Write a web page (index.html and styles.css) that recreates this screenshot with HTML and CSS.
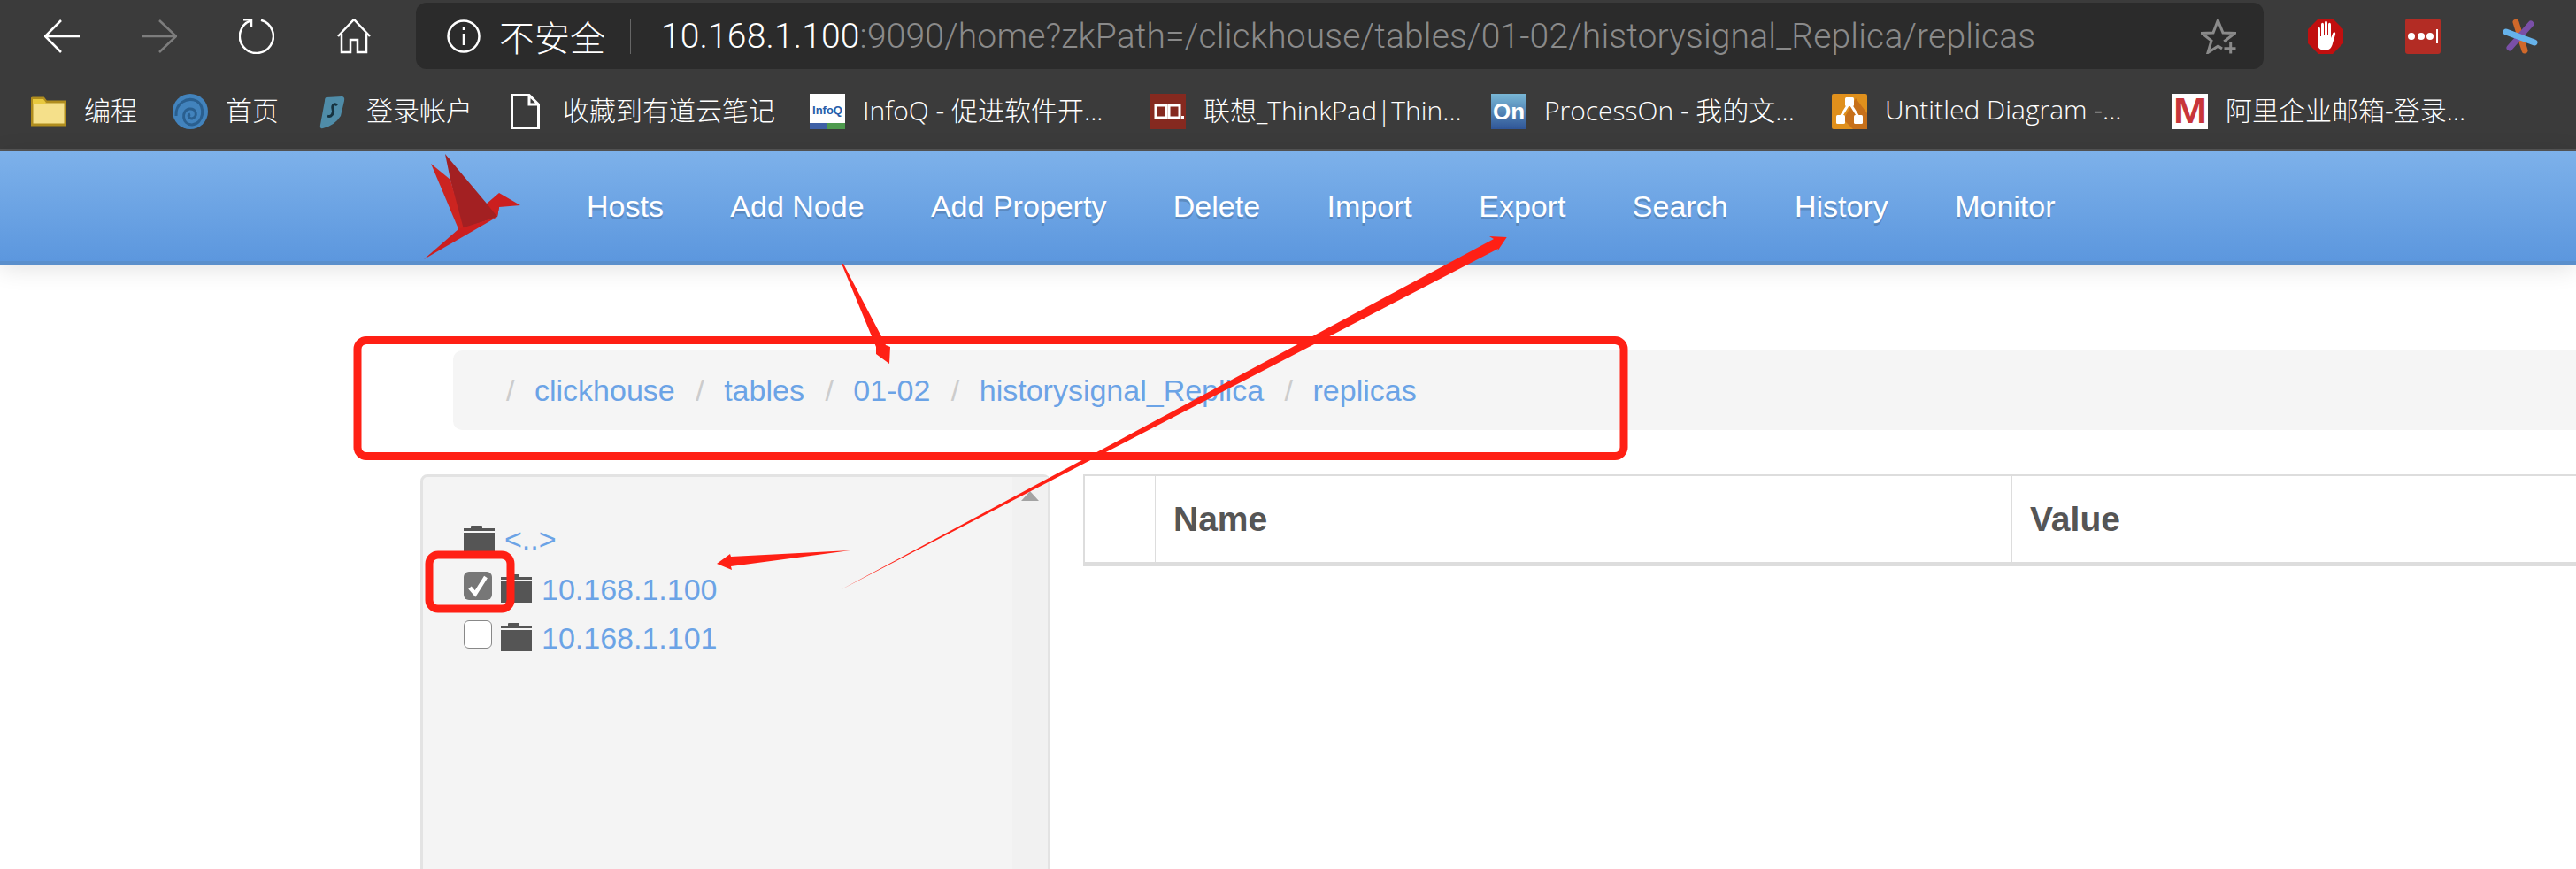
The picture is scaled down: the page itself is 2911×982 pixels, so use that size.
FILE: index.html
```html
<!DOCTYPE html>
<html lang="zh-CN">
<head>
<meta charset="utf-8">
<title>ZooKeeper Browser</title>
<link rel="stylesheet" href="styles.css">
</head>
<body>
<div class="browser">
  <div class="toolbar">
    <div class="tool-group">
      <svg class="ico" viewBox="0 0 40 40"><path d="M19 2 1 20 19 38M1 20H40" class="ln"/></svg>
      <svg class="ico" viewBox="0 0 40 40"><path d="M20 2 39 20 20 38M39 20H0" class="ln dim"/></svg>
      <svg class="ico" viewBox="0 0 40 40"><path d="M25 1.700A19 19 0 1 1 13 2.300" class="ln"/><path d="M5 1.200H14V10" class="ln"/></svg>
      <svg class="ico" viewBox="0 0 40 40"><path d="M2 20 20 1 38 20M6 17V38H16V24H24V38H34V17" class="ln"/></svg>
    </div>
    <div class="address">
      <svg class="info" viewBox="0 0 38 38"><circle cx="19" cy="19" r="17.500" class="ln"/><path d="M19 16V29M19 9V12" class="ln"/></svg>
      <span class="insecure">不安全</span>
      <span class="divider"></span>
      <span class="url"><span class="host">10.168.1.100</span>:9090/home?zkPath=/clickhouse/tables/01-02/historysignal_Replica/replicas</span>
      <svg class="star" viewBox="0 0 40 40"><path d="M29 26.500 27.500 25 38.500 16.500 25 16 19.300 2 14 16 1 16.500 12 25 8 38.500 19.500 31 24 34" class="ln grey thick"/><path d="M33.700 26V39.500M26.500 33.700H39.500" class="ln grey thick"/></svg>
    </div>
    <div class="tool-group">
      <svg class="ico" viewBox="0 0 40 40"><path d="M12 0H28L40 12V28L28 40H12L0 28V12Z" fill="#c10f0f"/><path d="M11 12c0-3 3-3 3 0v8l1 0V7c0-3 3-3 3 0v12h1V5c0-3 3-3 3 0v14h1V7c0-3 3-3 3 0v15l2-5c1-3 4-2 3 1l-3 10c-1 5-4 8-9 8-5 0-8-3-8-8Z" fill="#fff"/></svg>
      <svg class="ico" viewBox="0 0 40 40"><rect width="40" height="40" rx="3" fill="#b32c24"/><circle cx="7" cy="20" r="4" fill="#fff"/><circle cx="18" cy="20" r="4" fill="#fff"/><circle cx="28" cy="20" r="4" fill="#fff"/><rect x="35" y="12" width="2" height="16" fill="#fff"/></svg>
      <svg class="ico" viewBox="0 0 40 40"><path d="M15 4 25 36" class="band orange"/><path d="M32 6 8 33" class="band purple"/><path d="M4 15 36 27" class="band blue"/></svg>
    </div>
  </div>
  <div class="bookmarks">
    <div class="bm"><svg class="fav" viewBox="0 0 40 40"><path d="M1 6Q1 5 2 5H14L17 9H39V35H1Z" fill="#f5e08a" stroke="#b08d1e" stroke-width="3"/><path d="M2 6H14L17 10 14 12H2Z" fill="#e8c93f"/></svg><span>编程</span></div>
    <div class="bm"><svg class="fav" viewBox="0 0 40 40"><circle cx="20" cy="20" r="20" fill="#4283bd"/><path d="M4 25C3 11 16 3 27 8 38 14 35 34 22 35 11 35 9 19 19 17 27 16 29 26 22 28 18 28 17 24 20 23" fill="none" stroke="#2a5f8f" stroke-width="3"/></svg><span>首页</span></div>
    <div class="bm"><svg class="fav shark" viewBox="0 0 34 40"><path d="M9 4 26 3Q30 3 29 8L25 25Q18 36 5 39 1 40 2 35L7 8Q7 4 9 4Z" fill="#4f8ca8"/><path d="M21 13C18 10 15 13 16 17 18 22 14 27 10 25" fill="none" stroke="#16323f" stroke-width="3"/></svg><span>登录帐户</span></div>
    <div class="bm"><svg class="fav doc" viewBox="0 0 33 40"><path d="M1.500 1.500H21L31.500 12V38.500H1.500ZM21 1.500V12H31.500" fill="none" stroke="#fff" stroke-width="3"/></svg><span>收藏到有道云笔记</span></div>
    <div class="bm"><svg class="fav" viewBox="0 0 40 40"><rect width="40" height="40" fill="#fff"/><rect y="33" width="20" height="7" fill="#3f60a5"/><rect x="20" y="33" width="20" height="7" fill="#4e9a4e"/><text x="20" y="23" text-anchor="middle" class="fav-text infoq">InfoQ</text></svg><span>InfoQ - 促进软件开...</span></div>
    <div class="bm"><svg class="fav" viewBox="0 0 40 40"><rect width="40" height="40" fill="#85291f"/><rect x="6" y="13" width="12" height="14" fill="none" stroke="#fff" stroke-width="3"/><rect x="21" y="13" width="12" height="14" fill="none" stroke="#fff" stroke-width="3"/><rect x="35" y="25" width="3" height="3" fill="#fff"/></svg><span>联想_ThinkPad|Thin...</span></div>
    <div class="bm"><svg class="fav" viewBox="0 0 40 40"><defs><linearGradient id="ong" x1="0" y1="0" x2="0" y2="1"><stop offset="0" stop-color="#79b8d6"/><stop offset="1" stop-color="#2f5597"/></linearGradient></defs><rect width="40" height="40" fill="url(#ong)"/><text x="20" y="29" text-anchor="middle" class="fav-text on">On</text></svg><span>ProcessOn - 我的文...</span></div>
    <div class="bm"><svg class="fav" viewBox="0 0 40 40"><rect width="40" height="40" rx="2" fill="#e0901c"/><path d="M13 29 27 5 40 22V40H24Z" fill="#c7701a"/><path d="M20 10 10 26M20 10 30 26" stroke="#fff" stroke-width="3"/><rect x="15" y="4" width="10" height="10" rx="1.500" fill="#fff"/><rect x="5" y="24" width="10" height="10" rx="1.500" fill="#fff"/><rect x="25" y="24" width="10" height="10" rx="1.500" fill="#fff"/></svg><span>Untitled Diagram -...</span></div>
    <div class="bm"><svg class="fav" viewBox="0 0 40 40"><rect width="40" height="40" fill="#fff"/><text x="20" y="33" text-anchor="middle" class="fav-text mail" textLength="38" lengthAdjust="spacingAndGlyphs">M</text></svg><span>阿里企业邮箱-登录...</span></div>
  </div>
</div>

<nav class="navbar">
  <svg class="logo" viewBox="479 171 110 120">
    <path d="M503 172 550 228 564 232 562 243 522 257 509 201Z" fill="#a32022"/>
    <path d="M487 183 509 201 524 257 519 259Z" fill="#cc2420"/>
    <path d="M479 291 518 257 562 243Z" fill="#cc1f1f"/>
    <path d="M550 228 564 216 588 230 564 232 562 243Z" fill="#cc1f1f"/>
  </svg>
  <a class="nav-link">Hosts</a>
  <a class="nav-link">Add Node</a>
  <a class="nav-link">Add Property</a>
  <a class="nav-link">Delete</a>
  <a class="nav-link">Import</a>
  <a class="nav-link">Export</a>
  <a class="nav-link">Search</a>
  <a class="nav-link">History</a>
  <a class="nav-link">Monitor</a>
</nav>

<main class="main">
  <ol class="breadcrumb">
    <li><a>clickhouse</a></li>
    <li><a>tables</a></li>
    <li><a>01-02</a></li>
    <li><a>historysignal_Replica</a></li>
    <li><a>replicas</a></li>
  </ol>
  <div class="content">
    <aside class="sidebar">
      <div class="tree">
        <div class="row row-up">
          <svg class="folder" viewBox="0 0 35 32"><path d="M8 3V1Q8 0 9 0H20Q21 0 21 1V3H35V6H0V3ZM0 8H35V32H0Z"/></svg>
          <a class="up-link">&lt;..&gt;</a>
        </div>
        <div class="row">
          <span class="check checked"><svg viewBox="0 0 32 32"><path d="M7 18 13 25 25 6" fill="none" stroke="#fff" stroke-width="4.500"/></svg></span>
          <svg class="folder" viewBox="0 0 35 32"><path d="M8 3V1Q8 0 9 0H20Q21 0 21 1V3H35V6H0V3ZM0 8H35V32H0Z"/></svg>
          <a class="ip-link">10.168.1.100</a>
        </div>
        <div class="row">
          <span class="check"></span>
          <svg class="folder" viewBox="0 0 35 32"><path d="M8 3V1Q8 0 9 0H20Q21 0 21 1V3H35V6H0V3ZM0 8H35V32H0Z"/></svg>
          <a class="ip-link">10.168.1.101</a>
        </div>
      </div>
      <div class="scrollbar"><span class="scroll-up"></span></div>
    </aside>
    <div class="table">
      <div class="cell cell-blank"></div>
      <div class="cell">Name</div>
      <div class="cell cell-last">Value</div>
    </div>
  </div>
</main>

<svg class="annotations" viewBox="0 0 2911 982">
  <rect x="404" y="384.500" width="1431" height="131" rx="10" class="red-box"/>
  <rect x="485" y="627" width="92" height="61" rx="10" class="red-box"/>
  <polygon points="951,298 953,298 997,382 1001,390 1006,392 1005,411 990,400 990,392" class="red-fill"/>
  <polygon points="961,622 826,629 825,626 810,637 827,644 826,640" class="red-fill"/>
  <polygon points="949,667 1688,270 1683,267 1702.700,268 1692,284 1693,281" class="red-fill"/>
</svg>
</body>
</html>
```
FILE: styles.css
```css
* { box-sizing: border-box; }
html, body { margin: 0; padding: 0; }
body {
  position: relative;
  width: 2911px;
  height: 982px;
  overflow: hidden;
  background: #fff;
  font-family: "Liberation Sans", Arial, sans-serif;
}

/* Browser chrome */
.browser { background: #3b3b3b; border-bottom: 3px solid #555; height: 171px; }
.toolbar {
  display: flex;
  align-items: center;
  height: 84px;
  padding: 3px 43px 6px 50px;
}
.tool-group { display: flex; align-items: center; gap: 70px; }
.ico { width: 40px; height: 40px; flex: none; }
.ln { fill: none; stroke: #fff; stroke-width: 2.500; }
.dim { stroke: #7d7d7d; }
.grey { stroke: #8a8a8a; }
.thick { stroke-width: 3; }
.band { fill: none; stroke-width: 7; stroke-linecap: round; }
.orange { stroke: #d0682a; }
.purple { stroke: #7a4fa8; }
.blue { stroke: #66b2ea; }

.address {
  flex: 1;
  display: flex;
  align-items: center;
  height: 75px;
  margin: 0 50px;
  padding: 0 31px 0 35px;
  background: #2b2b2b;
  border-radius: 12px;
  color: #8a8a8a;
}
.info { width: 38px; height: 38px; flex: none; }
.insecure {
  margin-left: 21px;
  color: #fff;
  font: 300 40px "Noto Sans CJK SC", sans-serif;
}
.divider { width: 1px; height: 40px; margin: 0 34px 0 28px; background: #666; }
.url {
  font: 300 39px Roboto, "Liberation Sans", sans-serif;
  letter-spacing: .16px;
  white-space: nowrap;
}
.host { color: #fff; }
.star { width: 40px; height: 40px; margin-left: auto; }

.bookmarks {
  display: grid;
  grid-template-columns: 160px 165px 217px 338px 385px 385px 385px 385px 1fr;
  align-items: center;
  height: 84px;
  padding: 0 0 0 35px;
  color: #fff;
  font: 300 30px "Open Sans", "Noto Sans CJK SC", sans-serif;
}
.bm { display: flex; align-items: center; gap: 20px; white-space: nowrap; }
.bm span { margin-top: -6px; }
.fav { width: 40px; height: 40px; flex: none; }
.shark { width: 34px; }
.doc { width: 33px; margin-right: 6px; }
.fav-text { font-family: "Liberation Sans", sans-serif; font-weight: 700; }
.infoq { font-size: 13px; fill: #2a5ea8; }
.on { font-size: 26px; fill: #fff; }
.mail { font-size: 40px; fill: #c8353a; }

/* App navbar */
.navbar {
  position: relative;
  display: flex;
  align-items: center;
  height: 128px;
  padding: 0 0 0 479px;
  background: linear-gradient(#7db1ea, #5c97de);
  border-bottom: 4px solid #5a8fcc;
  box-shadow: 0 4px 26px rgba(0, 0, 0, .12);
}
.logo { width: 110px; height: 120px; margin-right: 74px; flex: none; }
.nav-link {
  margin-right: 75.400px;
  color: #fff;
  font-size: 34px;
  text-shadow: 0 3px 0 rgba(0, 0, 0, .18);
}

/* Main */
.main { padding: 97px 0 0 475px; }
.breadcrumb {
  display: flex;
  align-items: center;
  height: 90px;
  margin: 0 0 50px 37px;
  padding: 0 0 0 60px;
  list-style: none;
  background: #f5f5f5;
  border-radius: 10px 0 0 10px;
  font-size: 34px;
}
.breadcrumb li { display: flex; white-space: nowrap; }
.breadcrumb li::before { content: "/"; color: #ccc; margin-right: 22.500px; }
.breadcrumb li + li { margin-left: 23.500px; }
.breadcrumb a, .up-link, .ip-link { color: #6ba3e6; }

.content {
  display: flex;
  align-items: flex-start;
  gap: 37px;
  height: 446px;
  overflow: hidden;
}
.sidebar {
  display: flex;
  flex: none;
  width: 712px;
  height: 470px;
  background: #f4f4f4;
  border: 3px solid #e3e3e3;
  border-radius: 8px;
}
.tree { flex: 1; padding: 52px 0 0 46px; }
.row { display: flex; align-items: flex-start; height: 55px; }
.folder { width: 35px; height: 32px; margin: 3px 11px 0 0; fill: #555; flex: none; }
.up-link { font-size: 34px; line-height: 36px; }
.ip-link { font-size: 34px; line-height: 40px; }
.check {
  width: 32px;
  height: 32px;
  margin-right: 10px;
  flex: none;
  background: #fff;
  border: 1.500px solid #888;
  border-radius: 6px;
}
.checked { background: #777; border: 0; }
.check svg { display: block; width: 32px; height: 32px; }
.scrollbar {
  position: relative;
  width: 40px;
  background: #f1f1f1;
}
.scroll-up {
  position: absolute;
  top: 16px;
  left: 10px;
  border: 10.500px solid transparent;
  border-top: 0;
  border-bottom: 11px solid #a3a3a3;
}

.table {
  flex: 1;
  display: grid;
  grid-template-columns: 80px 968px 1fr;
  height: 104px;
  background: #fff;
  border-top: 2px solid #ddd;
  border-left: 2px solid #ddd;
  border-bottom: 5px solid #ddd;
  color: #555;
  font-size: 39px;
  font-weight: 700;
}
.cell {
  display: flex;
  align-items: center;
  padding-left: 20px;
  border-right: 1px solid #ddd;
}
.cell-last { border-right: 0; }

/* Red annotations drawn over the page */
.annotations {
  position: absolute;
  top: 0;
  left: 0;
  width: 2911px;
  height: 982px;
  pointer-events: none;
}
.red-box { fill: none; stroke: #ff2015; stroke-width: 9; }
.red-fill { fill: #ff2015; }
```
